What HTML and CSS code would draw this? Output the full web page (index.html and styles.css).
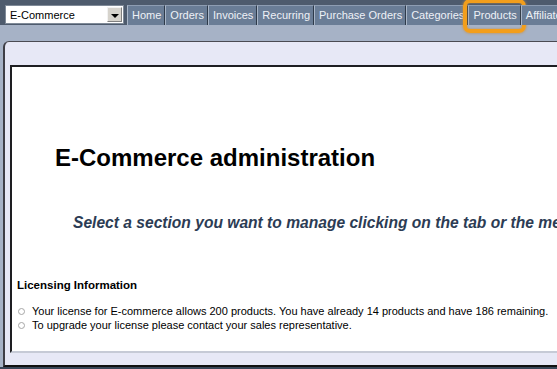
FILE: index.html
```html
<!DOCTYPE html>
<html lang="en">

<head>
  <meta charset="UTF-8">
  <meta name="viewport" content="width=device-width, initial-scale=1.0">
  <title>E-Commerce administration</title>
  <link rel="stylesheet" href="styles.css">
</head>

<body>

  <!-- Module selector and tabs -->
  <div class="topbar">
    <div class="module-select">
      <span class="module-name">E-Commerce</span>
      <span class="drop-btn"><span class="arrow"></span></span>
    </div>
    <div class="tabs">
      <span class="tab">Home</span>
      <span class="tab">Orders</span>
      <span class="tab">Invoices</span>
      <span class="tab">Recurring</span>
      <span class="tab">Purchase Orders</span>
      <span class="tab">Categories</span>
      <span class="tab tab-marked">Products<span class="marker"></span></span>
      <span class="tab">Affiliates</span>
    </div>
  </div>

  <!-- Main panel -->
  <div class="main">
    <div class="panel">
      <div class="content">
        <h1>E-Commerce administration</h1>
        <p class="intro">Select a section you want to manage clicking on the tab or the menu above.</p>

        <h3>Licensing Information</h3>
        <ul class="license">
          <li>Your license for E-commerce allows 200 products. You have already 14 products and have 186 remaining.</li>
          <li>To upgrade your license please contact your sales representative.</li>
        </ul>
      </div>
    </div>
  </div>

  <div class="footer"></div>

</body>

</html>
```

FILE: styles.css
```css
html,
body {
  margin: 0;
  padding: 0;
  height: 100%;
  overflow: hidden;
}

body {
  background-color: #a6b2c6;
  font-family: "Liberation Sans", Arial, sans-serif;
  display: flex;
  flex-direction: column;
}

/* top bar */
.topbar {
  flex-shrink: 0;
  background-color: #4e5b6d;
  display: flex;
  align-items: flex-start;
  padding: 5px 0 0 5px;
  height: 20px;
  white-space: nowrap;
}

.module-select {
  flex-shrink: 0;
  width: 117px;
  height: 17px;
  background: #fff;
  border: 1px solid #7f8a98;
  display: flex;
  align-items: center;
  justify-content: space-between;
  font-size: 11px;
  color: #000;
}

.module-name {
  padding-left: 4px;
}

.drop-btn {
  width: 15px;
  height: 15px;
  margin-right: 1px;
  background: #d6d3cc;
  border: 1px solid #f2f2f2;
  border-right-color: #808080;
  border-bottom-color: #808080;
  box-sizing: border-box;
  display: flex;
  align-items: center;
  justify-content: center;
}

.arrow {
  width: 0;
  height: 0;
  margin-top: 2px;
  border-left: 4px solid transparent;
  border-right: 4px solid transparent;
  border-top: 4px solid #000;
}

.tabs {
  display: flex;
  margin-left: 3px;
}

.tab {
  flex-shrink: 0;
  position: relative;
  height: 19px;
  line-height: 19px;
  padding: 0 3px 0 4px;
  font-size: 11px;
  color: #eef1f6;
  background-color: #6a7d96;
  border-left: 1px solid #a9b6c8;
  border-top: 1px solid #8e9db2;
  border-right: 1px solid #2e3a4a;
}

.marker {
  position: absolute;
  left: -6px;
  right: -6px;
  top: -7px;
  bottom: -8px;
  border: 4px solid #f29e1c;
  border-radius: 7px;
  box-shadow: 0 0 3px #c98c3a, inset 0 0 2px #c98c3a;
}

/* main area */
.main {
  flex-shrink: 0;
  padding: 16px 0 0 3px;
}

.panel {
  width: 620px;
  height: 294px;
  background-color: #e7e8f6;
  border-left: 2px solid #3e3e46;
  border-top: 1px solid #4a4a52;
  border-bottom: 2px solid #111;
  border-top-left-radius: 6px;
  padding: 23px 0 6px 5px;
}

.content {
  height: 284px;
  background-color: #fff;
  border: 2px solid #1e1e22;
  border-right: none;
  border-bottom-color: #c6cad6;
  overflow: hidden;
}

h1 {
  margin: 77px 0 0 43px;
  font-size: 24px;
  line-height: 28px;
  color: #000;
}

.intro {
  margin: 41px 0 0 61px;
  font-size: 15.6px;
  line-height: 19px;
  font-weight: bold;
  font-style: italic;
  color: #2c3c54;
  white-space: nowrap;
}

h3 {
  margin: 46px 0 0 5px;
  font-size: 11.5px;
  line-height: 15px;
  color: #000;
}

.license {
  margin: 11px 0 0 0;
  padding: 0 0 0 20px;
  list-style: none;
  font-size: 11px;
  line-height: 14px;
  color: #000;
}

.license li {
  position: relative;
  white-space: nowrap;
}

.license li::before {
  content: "";
  position: absolute;
  left: -14px;
  top: 4px;
  width: 5px;
  height: 5px;
  border: 1px solid #a6a6a6;
  border-radius: 50%;
}

.footer {
  margin-top: auto;
  height: 2px;
  background-color: #3a4658;
}
```
